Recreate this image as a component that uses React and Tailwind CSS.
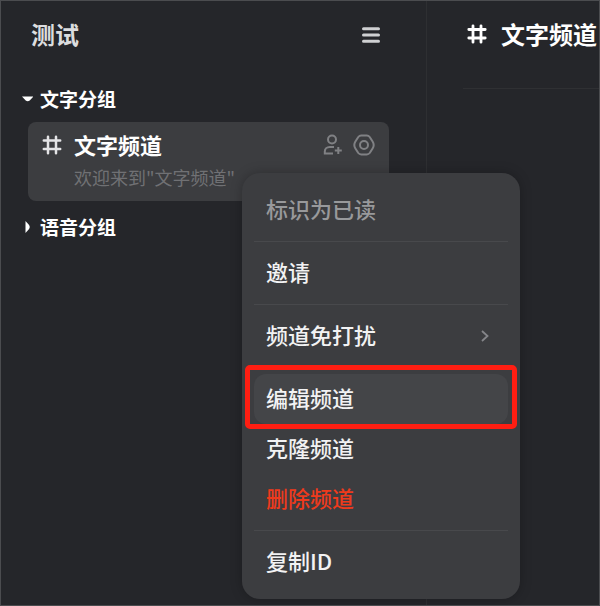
import React, { useState } from 'react';

const HashIcon = ({ className }) => (
  <svg viewBox="0 0 20 20" className={className} fill="none" stroke="currentColor" strokeLinecap="round" aria-hidden="true">
    <path d="M6 1.8v16.400M14 1.8v16.400M1.8 5.500h16.400M1.8 14h16.400" />
  </svg>
);

const MenuIcon = () => (
  <svg viewBox="0 0 20 18" className="h-[18px] w-5" fill="none" stroke="currentColor" strokeWidth="3" strokeLinecap="round" aria-hidden="true">
    <path d="M2.500 2.800h15M2.500 9h15M2.500 15.200h15" />
  </svg>
);

const InviteIcon = () => (
  <svg viewBox="0 0 20 22" className="h-[22px] w-5" fill="none" stroke="currentColor" strokeWidth="2" aria-hidden="true">
    <circle cx="9" cy="5.500" r="4" />
    <path d="M11 13H6.800c-3 0-5 1.900-5 4.400v2.200h8.200M15.300 13v7M11.800 16.500h7" />
  </svg>
);

const SettingsIcon = () => (
  <svg viewBox="0 0 22 22" className="size-[22px]" fill="none" stroke="currentColor" strokeWidth="2" strokeLinejoin="round" aria-hidden="true">
    <path d="M8.200 1.600h5.600q1.800 0 2.900 1.400l2.900 4.500q2.200 3.500 0 7l-2.900 4.500q-1.100 1.400-2.900 1.400H8.200q-1.800 0-2.900-1.400l-2.900-4.500q-2.200-3.500 0-7l2.900-4.500q1.100-1.400 2.900-1.400z" />
    <circle cx="11" cy="11" r="4" />
  </svg>
);

const Caret = ({ open }) => (
  <svg viewBox="0 0 12 12" className="size-3" fill="currentColor" aria-hidden="true">
    {open ? <path d="M1 3.500h11.500L8.700 7.500q-2 1.400-4 0z" /> : <path d="M4.500 0v12L8.100 8q1.400-2 0-4z" />}
  </svg>
);

const menuItems = [
  { id: 'read', label: '标识为已读', color: 'text-[#98999b]', divider: true },
  { id: 'invite', label: '邀请', color: 'text-[#f2f2f3]', divider: true },
  { id: 'mute', label: '频道免打扰', color: 'text-[#f2f2f3]', divider: true, submenu: true },
  { id: 'edit', label: '编辑频道', color: 'text-[#f2f2f3]', active: true },
  { id: 'clone', label: '克隆频道', color: 'text-[#f2f2f3]' },
  { id: 'delete', label: '删除频道', color: 'text-[#ee3a1c]', divider: true },
  { id: 'copy', label: '复制ID', color: 'text-[#f2f2f3]' },
];

const ContextMenu = () => (
  <div role="menu" className="absolute left-[241px] top-[172px] w-[278px] rounded-[18px] bg-[#3c3d40] p-3 shadow-[0_0_12px_rgba(0,0,0,0.25)]">
    {menuItems.map((item) => (
      <React.Fragment key={item.id}>
        <div className="relative">
          <button
            type="button"
            role="menuitem"
            className={`flex h-[50px] w-full items-center justify-between rounded-xl px-3 pb-1 text-[22px] font-medium leading-8 ${item.color} ${item.active ? 'bg-[#444548]' : ''}`}
          >
            {item.label}
            {item.submenu && (
              <svg viewBox="0 0 10 14" className="mr-1.5 mt-1 h-3.5 w-2.5" fill="none" stroke="#85868a" strokeWidth="1.8" aria-hidden="true">
                <path d="M2 2l5.500 5L2 12" />
              </svg>
            )}
          </button>
          {item.active && (
            <div className="pointer-events-none absolute -inset-x-[9px] -bottom-[5px] -top-[9px] rounded-[5px] border-[5px] border-[#ff1e12]" />
          )}
        </div>
        {item.divider && <hr className="my-1.5 border-[#48494c]" />}
      </React.Fragment>
    ))}
  </div>
);

const App = () => {
  const [textOpen, setTextOpen] = useState(true);
  const [voiceOpen, setVoiceOpen] = useState(false);

  return (
    <div className="relative flex min-h-screen overflow-hidden border border-[#4b4c4f] bg-[#25262a] font-['Noto_Sans_CJK_SC','Noto_Sans',sans-serif] text-white">
      {/* Channel list */}
      <aside className="w-[426px] shrink-0 border-r border-[#2e2f32]">
        <header className="flex h-[68px] items-center justify-between pl-[30px] pr-[45px]">
          <h1 className="pb-0.5 text-2xl font-bold leading-8 text-[#dcdddf]">测试</h1>
          <button type="button" aria-label="菜单" className="text-[#cfd0d2]">
            <MenuIcon />
          </button>
        </header>

        <section className="mt-4">
          <button
            type="button"
            aria-expanded={textOpen}
            onClick={() => setTextOpen(!textOpen)}
            className="flex h-7 items-center gap-[7px] pl-5 text-[19px] font-bold leading-7"
          >
            <Caret open={textOpen} />
            文字分组
          </button>
          {textOpen && (
            <div className="ml-[27px] mr-[37px] mt-[9px] flex h-[79px] items-start rounded-lg bg-[#3c3d40] px-[14px] pt-1.5">
              <HashIcon className="mt-[7px] size-5 stroke-[2.5] text-[#e4e4e6]" />
              <div className="ml-3 flex-1">
                <h2 className="text-[22px] font-bold leading-8">文字频道</h2>
                <p className="text-lg leading-[34px] text-[#707174]">欢迎来到"文字频道"</p>
              </div>
              <div className="flex h-[34px] items-center gap-2.5 text-[#808184]">
                <button type="button" aria-label="邀请成员">
                  <InviteIcon />
                </button>
                <button type="button" aria-label="频道设置">
                  <SettingsIcon />
                </button>
              </div>
            </div>
          )}
        </section>

        <section className="mt-3">
          <button
            type="button"
            aria-expanded={voiceOpen}
            onClick={() => setVoiceOpen(!voiceOpen)}
            className="flex h-7 items-center gap-[7px] pl-5 text-[19px] font-bold leading-7"
          >
            <Caret open={voiceOpen} />
            语音分组
          </button>
        </section>
      </aside>

      {/* Channel content */}
      <main className="min-w-0 flex-1 overflow-hidden pl-9">
        <header className="flex h-[88px] items-start gap-[14px] border-b border-[#2f3033] pl-1 pt-[17px]">
          <HashIcon className="mt-[6px] size-5 shrink-0 stroke-[2.8]" />
          <h2 className="whitespace-nowrap text-2xl font-bold leading-8">文字频道</h2>
        </header>
      </main>

      <ContextMenu />
    </div>
  );
};

export default App;
